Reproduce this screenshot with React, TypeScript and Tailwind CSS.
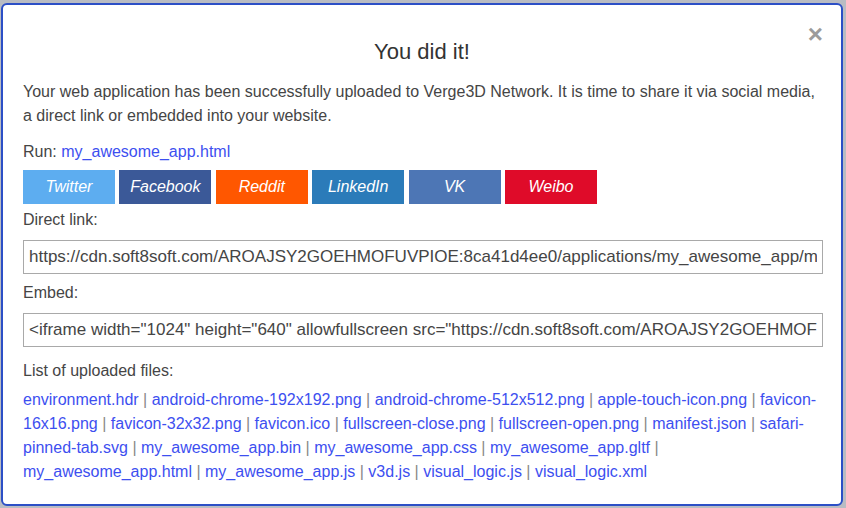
import React from 'react';

const shareButtons = [
  { label: 'Twitter', color: 'bg-[#5dadf0]' },
  { label: 'Facebook', color: 'bg-[#3b5998]' },
  { label: 'Reddit', color: 'bg-[#ff5700]' },
  { label: 'LinkedIn', color: 'bg-[#2b7bb9]' },
  { label: 'VK', color: 'bg-[#4d76b5]' },
  { label: 'Weibo', color: 'bg-[#df0b29]' },
];

const files = [
  'environment.hdr',
  'android-chrome-192x192.png',
  'android-chrome-512x512.png',
  'apple-touch-icon.png',
  'favicon-16x16.png',
  'favicon-32x32.png',
  'favicon.ico',
  'fullscreen-close.png',
  'fullscreen-open.png',
  'manifest.json',
  'safari-pinned-tab.svg',
  'my_awesome_app.bin',
  'my_awesome_app.css',
  'my_awesome_app.gltf',
  'my_awesome_app.html',
  'my_awesome_app.js',
  'v3d.js',
  'visual_logic.js',
  'visual_logic.xml',
];

const directLink =
  'https://cdn.soft8soft.com/AROAJSY2GOEHMOFUVPIOE:8ca41d4ee0/applications/my_awesome_app/my_awesome_app.html';
const embedCode =
  '<iframe width="1024" height="640" allowfullscreen src="https://cdn.soft8soft.com/AROAJSY2GOEHMOFUVPIOE:8ca41d4ee0/applications/my_awesome_app/my_awesome_app.html"></iframe>';

export default function App() {
  return (
    <div className="w-[846px] h-[508px] bg-[#b9bcc3] pl-[1px] pt-[3px] overflow-hidden font-['Liberation_Sans',Arial,sans-serif]">
      <div className="relative w-[842px] h-[503px] bg-white border-2 border-[#2c4fc6] rounded-[6px] px-[20px] text-[16px] leading-[24px] text-[#454545]">
        <button className="absolute right-[18px] top-[16px] text-[26px] leading-[26px] font-bold text-[#9b9b9b]">×</button>

        <h1 className="mt-[33px] text-center text-[22px] leading-[28px] text-[#333]">You did it!</h1>

        <p className="mt-[14px]">
          Your web application has been successfully uploaded to Verge3D Network. It is time to share it via social media,
          a direct link or embedded into your website.
        </p>

        <div className="mt-[12px]">
          Run: <a className="text-[#3d4ff0]">my_awesome_app.html</a>
        </div>

        <div className="mt-[6px] flex gap-[4.4px]">
          {shareButtons.map((b) => (
            <button key={b.label} className={`w-[92px] h-[34px] ${b.color} text-white italic text-[16px]`}>
              {b.label}
            </button>
          ))}
        </div>

        <div className="mt-[4px]">Direct link:</div>
        <input
          readOnly
          value={directLink}
          className="mt-[8px] block w-[800px] h-[34px] border border-[#a9a9a9] px-[5px] text-[17px] text-[#454545] outline-none"
        />

        <div className="mt-[7px]">Embed:</div>
        <input
          readOnly
          value={embedCode}
          className="mt-[8px] block w-[800px] h-[34px] border border-[#a9a9a9] px-[5px] text-[17px] text-[#454545] outline-none"
        />

        <div className="mt-[12px]">List of uploaded files:</div>
        <div className="mt-[5px] w-[800px]">
          {files.map((f, i) => (
            <React.Fragment key={f}>
              <a className="text-[#3d4ff0]">{f}</a>
              {i < files.length - 1 && <span className="text-[#888]"> | </span>}
            </React.Fragment>
          ))}
        </div>
      </div>
    </div>
  );
}
